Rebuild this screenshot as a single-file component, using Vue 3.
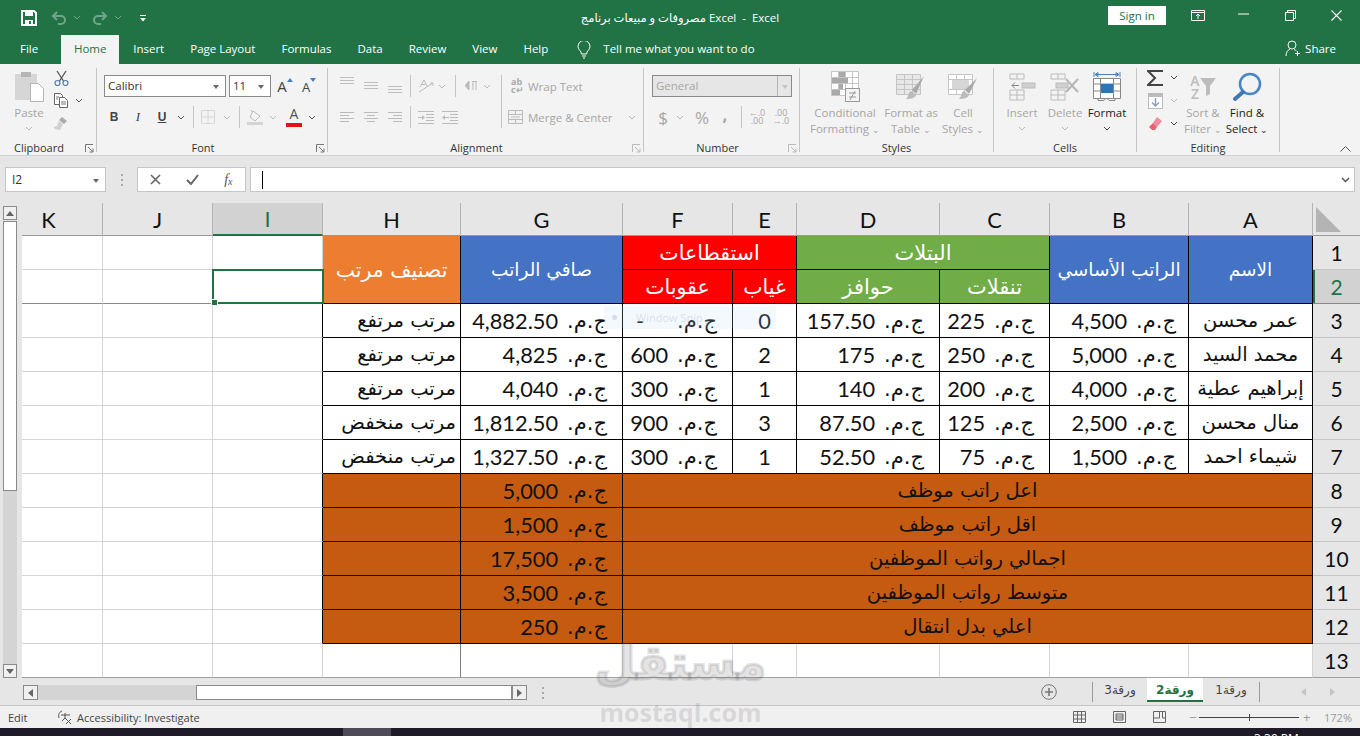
<template>
  <div class="app">
    <!-- title bar -->
    <header class="titlebar">
      <div class="qat">
        <svg width="16" height="16" viewBox="0 0 16 16" class="save"><path d="M1 1h12l2 2v12H1z" fill="none" stroke="#fff" stroke-width="2"/><rect x="4" y="1" width="8" height="5" fill="#fff"/><rect x="4" y="10" width="8" height="5" fill="#fff"/><rect x="8" y="11" width="2" height="3" fill="#217346"/></svg>
        <svg width="16" height="14" viewBox="0 0 16 14" class="undo"><path d="M6 1 2 5l4 4M2 5h8a4 4 0 0 1 0 8H7" fill="none" stroke="#6fa68a" stroke-width="2"/></svg>
        <svg width="8" height="5" viewBox="0 0 8 5" class="qchev"><path d="m1 1 3 3 3-3" fill="none" stroke="#6fa68a"/></svg>
        <svg width="16" height="14" viewBox="0 0 16 14" class="redo"><path d="m10 1 4 4-4 4M14 5H6a4 4 0 0 0 0 8h3" fill="none" stroke="#6fa68a" stroke-width="2"/></svg>
        <svg width="8" height="5" viewBox="0 0 8 5" class="qchev"><path d="m1 1 3 3 3-3" fill="none" stroke="#6fa68a"/></svg>
        <svg width="8" height="8" viewBox="0 0 8 8" class="custom"><path d="M1 1h6v1H1zM1 4h6L4 7.500z" fill="#fff"/></svg>
      </div>
      <div class="doc-title">مصروفات و مبيعات برنامج Excel &nbsp;-&nbsp; Excel</div>
      <div class="win">
        <button class="signin">Sign in</button>
        <svg width="14" height="11" viewBox="0 0 14 11" class="w1"><path d="M.5.5h13v10H.5zM.5 2.500h13M7 9V4.500M5 6l2-2 2 2" fill="none" stroke="#fff"/></svg>
        <svg width="11" height="2" viewBox="0 0 11 2" class="w2"><path d="M0 1h11" stroke="#fff"/></svg>
        <svg width="11" height="11" viewBox="0 0 11 11" class="w3"><path d="M.5 2.500h8v8h-8zM2.500 2.500v-2h8v8h-2" fill="none" stroke="#fff"/></svg>
        <svg width="11" height="11" viewBox="0 0 11 11" class="w4"><path d="m.5.5 10 10M10.500.5l-10 10" stroke="#fff" stroke-width="1.100"/></svg>
      </div>
    </header>

    <!-- tabs -->
    <nav class="tabs">
      <span v-for="t in tabs" :key="t" class="tab" :class="{ active: t === 'Home', file: t === 'File' }">{{ t }}</span>
      <svg width="14" height="18" viewBox="0 0 14 18" class="bulb"><path d="M4.500 13c0-3-3.500-4-3.500-7.500a6 6 0 0 1 12 0C13 9 9.500 10 9.500 13zM5 15h4M6 17h2" fill="none" stroke="#fff"/></svg>
      <span class="tell">Tell me what you want to do</span>
      <span class="share">
        <svg width="16" height="17" viewBox="0 0 16 17"><circle cx="7" cy="5" r="4" fill="none" stroke="#fff"/><path d="M1 16c0-4 2-6 4-7M9 9.500c1 .3 2 1 2.500 1.500M12.500 11v5M10 13.500h5" fill="none" stroke="#fff"/></svg>
        Share
      </span>
    </nav>

    <!-- ribbon -->
    <section class="ribbon">
      <div class="group g-clip">
        <div class="body">
          <div class="big paste">
            <div class="big-ic">
              <svg width="30" height="31" viewBox="0 0 30 31"><rect x="1" y="3" width="22" height="26" fill="#d6d6d6"/><rect x="7" y="1" width="10" height="5" fill="#b5b5b5"/><path d="M16.500 12.500h8l5 5v13h-13z" fill="#fff" stroke="#b5b5b5"/></svg>
            </div>
            <span>Paste</span>
            <svg width="8" height="5" viewBox="0 0 8 5" class="chev"><path d="m1 1 3 3 3-3" fill="none" stroke="#bbb"/></svg>
          </div>
          <div class="mini-col">
            <div class="mini">
              <svg width="15" height="16" viewBox="0 0 15 16"><path d="M3 1l6.500 10M12 1 5.500 11" fill="none" stroke="#555" stroke-width="1.300"/><circle cx="3.500" cy="13" r="2.500" fill="none" stroke="#4a7ebb" stroke-width="1.200"/><circle cx="11.500" cy="13" r="2.500" fill="none" stroke="#4a7ebb" stroke-width="1.200"/></svg>
            </div>
            <div class="mini">
              <svg width="16" height="15" viewBox="0 0 16 15"><path d="M1.500.5h6l2 2v9h-8z" fill="#fff" stroke="#666"/><path d="M6.500 4.500h5l3 3v7h-8z" fill="#fff" stroke="#666"/><path d="M3 4h3M3 6h2M8 9h5M8 11h5" stroke="#777"/></svg>
              <svg width="8" height="5" viewBox="0 0 8 5" class="chev-out"><path d="m1 1 3 3 3-3" fill="none" stroke="#555"/></svg>
            </div>
            <div class="mini">
              <svg width="16" height="15" viewBox="0 0 16 15"><path d="M9 1l5 4-3 3-5-4z" fill="#aaa"/><path d="M6 5l4 3-3 6-5-1-1-2 3-1z" fill="#d0d0d0"/></svg>
            </div>
          </div>
        </div>
        <div class="label">Clipboard</div>
        <svg class="launch" width="9" height="9" viewBox="0 0 9 9"><path d="M.5 8V.5H8M3 3l5 5M8 4.500V8H4.500" fill="none" stroke="#777"/></svg>
      </div>

      <div class="group g-font">
        <div class="body col">
          <div class="row">
            <div class="combo" style="width: 122px">Calibri<i class="tri"></i></div>
            <div class="combo ml3" style="width: 42px">11<i class="tri"></i></div>
            <div class="ic ml2 grow-a">A<svg width="6" height="4" viewBox="0 0 6 4"><path d="M0 4l3-4 3 4z" fill="#4a7ebb"/></svg></div>
            <div class="ic shrink-a">A<svg width="6" height="4" viewBox="0 0 6 4"><path d="M0 0l3 4 3-4z" fill="#4a7ebb"/></svg></div>
          </div>
          <div class="row row2">
            <div class="ic fmt bold mln2">B</div>
            <div class="ic fmt ital">I</div>
            <div class="ic fmt under">U</div>
            <svg width="8" height="5" viewBox="0 0 8 5" class="chev ml3"><path d="m1 1 3 3 3-3" fill="none" stroke="#555"/></svg>
            <i class="vsep ml8"></i>
            <div class="ic ml2"><svg width="14" height="14" viewBox="0 0 14 14"><path d="M.5.500h13v13H.5zM7 .500v13M.5 7h13" fill="none" stroke="#bdbdbd" stroke-dasharray="1 1"/></svg></div>
            <svg width="8" height="5" viewBox="0 0 8 5" class="chev ml3"><path d="m1 1 3 3 3-3" fill="none" stroke="#bbb"/></svg>
            <i class="vsep ml8"></i>
            <div class="ic ml3"><svg width="16" height="15" viewBox="0 0 16 15"><path d="M6 1l7 5-5 5-5-4z" fill="none" stroke="#bbb"/><path d="M5 2 4 0" stroke="#bbb"/><rect y="12" width="16" height="3" fill="#d4d4d4"/></svg></div>
            <svg width="8" height="5" viewBox="0 0 8 5" class="chev ml2"><path d="m1 1 3 3 3-3" fill="none" stroke="#bbb"/></svg>
            <div class="ic fcolor ml5">A<i></i></div>
            <svg width="8" height="5" viewBox="0 0 8 5" class="chev ml2"><path d="m1 1 3 3 3-3" fill="none" stroke="#555"/></svg>
          </div>
        </div>
        <div class="label">Font</div>
        <svg class="launch" width="9" height="9" viewBox="0 0 9 9"><path d="M.5 8V.5H8M3 3l5 5M8 4.500V8H4.500" fill="none" stroke="#777"/></svg>
      </div>

      <div class="group g-align">
        <div class="body col">
          <div class="row">
            <div class="ic"><svg width="14" height="22" viewBox="0 0 14 22"><path d="M0 2.500h14M0 5.500h14M0 8.500h14" stroke="#bdbdbd"/></svg></div>
            <div class="ic"><svg width="14" height="22" viewBox="0 0 14 22"><path d="M0 7.500h14M0 10.500h14M0 13.500h14" stroke="#bdbdbd"/></svg></div>
            <div class="ic"><svg width="14" height="22" viewBox="0 0 14 22"><path d="M0 11.500h14M0 14.500h14M0 17.500h14" stroke="#bdbdbd"/></svg></div>
            <i class="vsep ml3"></i>
            <div class="ic ml3"><svg width="16" height="14" viewBox="0 0 16 14"><path d="M2 8 6 1l3 6M3.500 5.500h4M1 13 15 4M15 4h-3M15 4v3" fill="none" stroke="#bbb"/></svg></div>
            <svg width="8" height="5" viewBox="0 0 8 5" class="chev"><path d="m1 1 3 3 3-3" fill="none" stroke="#bbb"/></svg>
            <i class="vsep ml9"></i>
            <div class="ic ml3"><svg width="13" height="10" viewBox="0 0 13 10"><path d="M4 0v9L0 4.500zM8 0v9M11 0v9M7 .500h5M8 4H7" fill="#bbb" stroke="#bbb"/></svg></div>
            <svg width="8" height="5" viewBox="0 0 8 5" class="chev"><path d="m1 1 3 3 3-3" fill="none" stroke="#bbb"/></svg>
            <i class="vsep ml10"></i>
            <div class="wrap wraptext">
              <span class="ab">ab<br />c↵</span>
              <span class="dim">Wrap Text</span>
            </div>
          </div>
          <div class="row row2">
            <div class="ic"><svg width="14" height="13" viewBox="0 0 14 13"><path d="M0 1.500h14M0 4.500h9M0 7.500h14M0 10.500h9" stroke="#bbb"/></svg></div>
            <div class="ic"><svg width="14" height="13" viewBox="0 0 14 13"><path d="M0 1.500h14M3 4.500h8M0 7.500h14M3 10.500h8" stroke="#bbb"/></svg></div>
            <div class="ic"><svg width="14" height="13" viewBox="0 0 14 13"><path d="M0 1.500h14M5 4.500h9M0 7.500h14M5 10.500h9" stroke="#bbb"/></svg></div>
            <i class="vsep ml3"></i>
            <div class="ic ml3"><svg width="16" height="13" viewBox="0 0 16 13"><path d="M0 .500h16M8 3.500h8M8 6.500h8M8 9.500h8M0 12.500h16" stroke="#bbb"/><path d="M0 6.500h5" stroke="#bbb"/><path d="M4 4l3 2.500L4 9z" fill="#bbb"/></svg></div>
            <div class="ic"><svg width="16" height="13" viewBox="0 0 16 13"><path d="M0 .500h16M8 3.500h8M8 6.500h8M8 9.500h8M0 12.500h16" stroke="#bbb"/><path d="M2 6.500h5" stroke="#bbb"/><path d="M3 4 0 6.500 3 9z" fill="#bbb"/></svg></div>
            <i class="vsep up"></i>
            <div class="wrap merge">
              <svg width="15" height="14" viewBox="0 0 15 14"><path d="M.5.500h14v13H.5zM.5 4.500h14M.5 9.500h14M7.500.500v4M7.500 9.500v4M3 7h9" fill="none" stroke="#bbb"/></svg>
              <span class="dim">Merge &amp; Center</span>
              <svg width="8" height="5" viewBox="0 0 8 5" class="chev ml10"><path d="m1 1 3 3 3-3" fill="none" stroke="#bbb"/></svg>
            </div>
          </div>
        </div>
        <div class="label">Alignment</div>
        <svg class="launch" width="9" height="9" viewBox="0 0 9 9"><path d="M.5 8V.5H8M3 3l5 5M8 4.500V8H4.500" fill="none" stroke="#bbb"/></svg>
      </div>

      <div class="group g-num">
        <div class="body col">
          <div class="row">
            <div class="combo off">General<i class="drop"><i class="tri tri-off"></i></i></div>
          </div>
          <div class="row row2">
            <div class="ic sym mln1">$</div>
            <svg width="8" height="5" viewBox="0 0 8 5" class="chev ml1"><path d="m1 1 3 3 3-3" fill="none" stroke="#bbb"/></svg>
            <div class="ic sym ml6">%</div>
            <div class="ic sym mln1 comma">,</div>
            <i class="vsep ml4"></i>
            <div class="ic dec ml3"><span>←.0</span><span>.00</span></div>
            <div class="ic dec"><span>.00</span><span>→.0</span></div>
          </div>
        </div>
        <div class="label">Number</div>
        <svg class="launch" width="9" height="9" viewBox="0 0 9 9"><path d="M.5 8V.5H8M3 3l5 5M8 4.500V8H4.500" fill="none" stroke="#bbb"/></svg>
      </div>

      <div class="group g-styles">
        <div class="body">
          <div class="big" style="width: 66px">
            <div class="big-ic">
              <svg width="29" height="31" viewBox="0 0 29 31"><path d="M.5.500h27v24H.5zM.5 6.500h27M.5 12.500h27M.5 18.500h27M7.500.500v24M14.500.500v24M21.500.500v24" fill="#fff" stroke="#c5c5c5"/><path d="M8 1h6v5h-6zM1 7h16v5H1zM8 13h4v5H8zM1 19h8v5H1z" fill="#a9a9a9"/><rect x="14.500" y="17.500" width="14" height="13" fill="#f3f3f3" stroke="#999"/><path d="M18 22h7M18 26h7M24 20l-5 9" stroke="#999"/></svg>
            </div>
            <span>Conditional</span><span>Formatting <b class="v">⌄</b></span>
          </div>
          <div class="big" style="width: 66px">
            <div class="big-ic">
              <svg width="30" height="30" viewBox="0 0 30 30"><path d="M.5 2.500h24v20H.5zM.5 7.500h24M.5 12.500h24M.5 17.500h24M8.500 2.500v20M16.500 2.500v20" fill="#e8e8e8" stroke="#c5c5c5"/><path d="M28 4 16 18l4 4z" fill="#a9a9a9"/><path d="M15 19c-3 1-2 5-5 8 5 0 9-1 10-4z" fill="#bbb"/></svg>
            </div>
            <span>Format as</span><span>Table <b class="v">⌄</b></span>
          </div>
          <div class="big" style="width: 38px">
            <div class="big-ic">
              <svg width="30" height="30" viewBox="0 0 30 30"><path d="M.5 2.500h24v20H.5zM.5 7.500h24M8.500 2.500v5M16.500 2.500v5M8.500 17.500v5M16.500 17.500v5M.5 17.500h24" fill="#fff" stroke="#c5c5c5"/><rect x="4" y="8" width="17" height="9" fill="#d6d6d6"/><path d="M29 6 17 18l4 4z" fill="#a9a9a9"/><path d="M16 19c-3 1-2 5-5 8 5 0 9-1 10-4z" fill="#bbb"/></svg>
            </div>
            <span>Cell</span><span>Styles <b class="v">⌄</b></span>
          </div>
        </div>
        <div class="label">Styles</div>
      </div>

      <div class="group g-cells">
        <div class="body">
          <div class="big" style="width: 42px">
            <div class="big-ic">
              <svg width="27" height="28" viewBox="0 0 27 28"><path d="M1 1h14v5H1zM8 1v5M1 17h14v10H1zM1 22h14M8 17v10" fill="none" stroke="#bbb"/><rect x="13" y="10" width="13" height="5" fill="#d0d0d0" stroke="#bbb"/><path d="M10 12.500H3M6 9.500l-3 3 3 3" fill="none" stroke="#888"/></svg>
            </div>
            <span>Insert</span>
            <svg width="8" height="5" viewBox="0 0 8 5" class="chev"><path d="m1 1 3 3 3-3" fill="none" stroke="#bbb"/></svg>
          </div>
          <div class="big" style="width: 44px">
            <div class="big-ic">
              <svg width="30" height="28" viewBox="0 0 30 28"><path d="M1 1h14v5H1zM8 1v5M1 17h14v10H1zM1 22h14M8 17v10" fill="none" stroke="#bbb"/><rect x="6" y="10" width="12" height="5" fill="#d0d0d0" stroke="#bbb"/><path d="m16 6 12 13M28 6 16 19" stroke="#b5b5b5" stroke-width="2"/></svg>
            </div>
            <span>Delete</span>
            <svg width="8" height="5" viewBox="0 0 8 5" class="chev"><path d="m1 1 3 3 3-3" fill="none" stroke="#bbb"/></svg>
          </div>
          <div class="big on" style="width: 40px">
            <div class="big-ic">
              <svg width="28" height="31" viewBox="0 0 28 31"><path d="M1 1v5M27 1v5M2 3.500h24M2 3.500l3-2v4zM26 3.500l-3-2v4z" fill="none" stroke="#4a7ebb"/><path d="M.5 7.500h27v20H.5zM.5 13h27M.5 20h27M7.500 7.500v20M20.500 7.500v20" fill="#fff" stroke="#888"/><rect x="8" y="13" width="12" height="9" fill="#2e75b6"/><path d="M5 27.500v2h6l2-2M14 27.500l2 2h6v-2" fill="none" stroke="#888"/></svg>
            </div>
            <span>Format</span>
            <svg width="8" height="5" viewBox="0 0 8 5" class="chev"><path d="m1 1 3 3 3-3" fill="none" stroke="#444"/></svg>
          </div>
        </div>
        <div class="label">Cells</div>
      </div>

      <div class="group g-edit">
        <div class="body">
          <div class="edit-col">
            <div class="mini">
              <svg width="16" height="16" viewBox="0 0 16 16"><path d="M15 2V1H1l7 7-7 7h14v-1" fill="none" stroke="#444" stroke-width="2"/></svg>
              <svg width="8" height="5" viewBox="0 0 8 5" class="chev-out"><path d="m1 1 3 3 3-3" fill="none" stroke="#444"/></svg>
            </div>
            <div class="mini">
              <svg width="15" height="16" viewBox="0 0 15 16"><rect width="15" height="3" fill="#bbb"/><rect x=".5" y="3.500" width="14" height="12" fill="#fff" stroke="#bbb"/><path d="M7.500 5v8M4 9.500l3.500 3.500L11 9.500" fill="none" stroke="#8a9eb5" stroke-width="1.400"/></svg>
              <svg width="8" height="5" viewBox="0 0 8 5" class="chev-out"><path d="m1 1 3 3 3-3" fill="none" stroke="#bbb"/></svg>
            </div>
            <div class="mini">
              <svg width="14" height="13" viewBox="0 0 14 13"><path d="M9 0l5 4-5 6-4-4z" fill="#f08a9c"/><path d="M5 6l4 4-2 3H4L1 10z" fill="#e8616f"/></svg>
              <svg width="8" height="5" viewBox="0 0 8 5" class="chev-out"><path d="m1 1 3 3 3-3" fill="none" stroke="#444"/></svg>
            </div>
          </div>
          <div class="big" style="width: 44px">
            <div class="big-ic sortic">
              <span class="az">A<br />Z</span>
              <svg width="16" height="19" viewBox="0 0 16 19"><path d="M0 1h16L10 9v8l-4 2V9z" fill="#bdbdbd"/></svg>
            </div>
            <span>Sort &amp;</span><span>Filter <b class="v">⌄</b></span>
          </div>
          <div class="big on" style="width: 44px">
            <div class="big-ic">
              <svg width="30" height="30" viewBox="0 0 30 30"><circle cx="18" cy="12" r="10" fill="none" stroke="#4a86c5" stroke-width="2.600"/><path d="M11 20 3 27" stroke="#3f78b5" stroke-width="4" stroke-linecap="round"/></svg>
            </div>
            <span>Find &amp;</span><span>Select <b class="v">⌄</b></span>
          </div>
        </div>
        <div class="label">Editing</div>
      </div>
      <svg class="collapse" width="11" height="6" viewBox="0 0 11 6"><path d="m.5 5.500 5-5 5 5" fill="none" stroke="#555"/></svg>
    </section>

    <!-- formula bar -->
    <section class="formula">
      <div class="namebox">I2<i class="tri"></i></div>
      <div class="fdots"><i></i><i></i><i></i></div>
      <div class="fbtns">
        <svg width="11" height="11" viewBox="0 0 11 11"><path d="m1 1 9 9M10 1l-9 9" stroke="#666" stroke-width="1.600"/></svg>
        <svg width="13" height="11" viewBox="0 0 13 11"><path d="m1 6 4 4 7-9" fill="none" stroke="#666" stroke-width="2"/></svg>
        <span class="fx">f<sub>x</sub></span>
      </div>
      <div class="finput"><i class="caret"></i>
        <svg width="9" height="6" viewBox="0 0 9 6"><path d="m1 1 3.500 3.500L8 1" fill="none" stroke="#555" stroke-width="1.500"/></svg>
      </div>
    </section>

    <!-- sheet -->
    <section class="sheet">
      <div class="vscroll">
        <button class="sb"><svg width="8" height="5" viewBox="0 0 8 5"><path d="M0 5l4-5 4 5z" fill="#666"/></svg></button>
        <div class="vthumb"></div>
        <div class="vtrack"></div>
        <button class="sb"><svg width="8" height="5" viewBox="0 0 8 5"><path d="M0 0l4 5 4-5z" fill="#666"/></svg></button>
      </div>
      <div class="grid">
        <div v-for="c in headCols" :key="c" class="ch" :class="{ sel: c === 'I', cut: c === 'K' }">{{ c }}</div>
        <div class="corner"><svg width="25" height="25" viewBox="0 0 25 25"><path d="M0 0v25h25z" fill="#b4b4b4"/></svg></div>
        <div
          v-for="(c, i) in cells"
          :key="i"
          class="cell"
          :class="c.cls"
          :style="{ gridColumn: 'span ' + (c.cs || 1), gridRow: 'span ' + (c.rs || 1) }"
        >
          <template v-if="c.money">
            <span class="money"><span class="ar cur" dir="rtl">ج.م.</span><span :class="{ dash: c.money === '-' }">{{ c.money }}</span></span>
          </template>
          <span v-else-if="c.num" class="num">{{ c.num }}</span>
          <span v-else-if="c.text" class="ar">{{ c.text }}</span>
          <div v-if="c.selected" class="selbox"><i></i></div>
        </div>
      </div>
    </section>

    <!-- sheet tabs -->
    <section class="sheetbar">
      <button class="sb hb"><svg width="5" height="8" viewBox="0 0 5 8"><path d="M5 0 0 4l5 4z" fill="#666"/></svg></button>
      <div class="htrack"></div>
      <div class="hthumb"></div>
      <button class="sb hb"><svg width="5" height="8" viewBox="0 0 5 8"><path d="m0 0 5 4-5 4z" fill="#666"/></svg></button>
      <div class="fdots hdots"><i></i><i></i><i></i></div>
      <svg class="plus" width="16" height="16" viewBox="0 0 16 16"><circle cx="8" cy="8" r="7.300" fill="none" stroke="#777"/><path d="M8 4v8M4 8h8" stroke="#777" stroke-width="1.600"/></svg>
      <i class="tsep ts1"></i>
      <span class="stab s3">ورقة3</span>
      <span class="stab s2">ورقة2</span>
      <span class="stab s1">ورقة1</span>
      <i class="tsep"></i>
      <svg class="sarrow a1" width="5" height="8" viewBox="0 0 5 8"><path d="M5 0 0 4l5 4z" fill="#c4c4c4"/></svg>
      <svg class="sarrow a2" width="5" height="8" viewBox="0 0 5 8"><path d="m0 0 5 4-5 4z" fill="#c4c4c4"/></svg>
    </section>

    <!-- status bar -->
    <footer class="status">
      <span class="st-edit">Edit</span>
      <svg width="16" height="15" viewBox="0 0 16 15" class="st-acc"><path d="M5 1C2 2 1 5 2 8M8 3v5M4 5h9M8 8l-3 3M8 8l2 2M9 9l5 5M14 9l-5 5" fill="none" stroke="#555"/></svg>
      <span>Accessibility: Investigate</span>
      <div class="st-right">
        <svg width="13" height="12" viewBox="0 0 13 12"><path d="M.5.500h12v11H.5zM.5 4h12M.5 8h12M4.500.500v11M8.500.500v11" fill="none" stroke="#666"/></svg>
        <svg width="13" height="12" viewBox="0 0 13 12" class="v2"><path d="M.5.500h12v11H.5zM3 3h7v6H3zM3 5h7M3 7h7" fill="none" stroke="#666"/></svg>
        <svg width="13" height="12" viewBox="0 0 13 12" class="v3"><path d="M.5.500h12v11H.5zM.5 7h6M6.500.500V7M12.500 7h-3M9.500.500V7" fill="none" stroke="#666"/></svg>
        <span class="zm">−</span>
        <span class="slider"><i></i></span>
        <span class="zm zp">+</span>
        <span class="pct">172%</span>
      </div>
    </footer>
    <div class="taskbar">
      <i class="tb-item"></i>
      <span class="clock">3:39 PM</span>
    </div>

    <!-- overlays -->
    <div class="snip"><i></i>Window Snip</div>
    <div class="wm">
      <div class="wm-logo">مستقل</div>
      <div class="wm-url">mostaql.com</div>
    </div>
  </div>
</template>

<script setup>
const tabs = ['File', 'Home', 'Insert', 'Page Layout', 'Formulas', 'Data', 'Review', 'View', 'Help']
const headCols = ['K', 'J', 'I', 'H', 'G', 'F', 'E', 'D', 'C', 'B', 'A']

const people = [
  ['عمر محسن', '4,500', '225', '157.50', '0', '-', '4,882.50', 'مرتب مرتفع'],
  ['محمد السيد', '5,000', '250', '175', '2', '600', '4,825', 'مرتب مرتفع'],
  ['إبراهيم عطية', '4,000', '200', '140', '1', '300', '4,040', 'مرتب مرتفع'],
  ['منال محسن', '2,500', '125', '87.50', '3', '900', '1,812.50', 'مرتب منخفض'],
  ['شيماء احمد', '1,500', '75', '52.50', '1', '300', '1,327.50', 'مرتب منخفض']
]

const summary = [
  ['5,000', 'اعل راتب موظف'],
  ['1,500', 'اقل راتب موظف'],
  ['17,500', 'اجمالي رواتب الموظفين'],
  ['3,500', 'متوسط رواتب الموظفين'],
  ['250', 'اعلي بدل انتقال']
]

// cells in grid order, left to right, row by row
const cells = []

function blanks(row, leftBorder) {
  cells.push({ cls: 'blank' + (row === 2 ? ' fz' : '') })
  cells.push({ cls: 'blank' + (row === 2 ? ' fz' : '') })
  cells.push({
    cls: 'blank' + (row === 2 ? ' fz' : '') + (leftBorder ? ' edge' : ''),
    selected: row === 2
  })
}
function rowHead(n) {
  cells.push({ num: n, cls: 'rh' + (n === 2 ? ' sel' : '') })
}

blanks(1)
cells.push({ text: 'تصنيف مرتب', rs: 2, cls: 'hd orange' })
cells.push({ text: 'صافي الراتب', rs: 2, cls: 'hd blue' })
cells.push({ text: 'استقطاعات', cs: 2, cls: 'hd red' })
cells.push({ text: 'البتلات', cs: 2, cls: 'hd green' })
cells.push({ text: 'الراتب الأساسي', rs: 2, cls: 'hd blue' })
cells.push({ text: 'الاسم', rs: 2, cls: 'hd blue' })
rowHead(1)

blanks(2)
cells.push({ text: 'عقوبات', cls: 'hd red' })
cells.push({ text: 'غياب', cls: 'hd red' })
cells.push({ text: 'حوافز', cls: 'hd green' })
cells.push({ text: 'تنقلات', cls: 'hd green' })
rowHead(2)

people.forEach((p, i) => {
  blanks(i + 3, true)
  cells.push({ text: p[7], cls: 'td right hcol' })
  cells.push({ money: p[6], cls: 'td right' })
  cells.push({ money: p[5], cls: 'td right' })
  cells.push({ num: p[4], cls: 'td center' })
  cells.push({ money: p[3], cls: 'td right' })
  cells.push({ money: p[2], cls: 'td right' })
  cells.push({ money: p[1], cls: 'td right bcol' })
  cells.push({ text: p[0], cls: 'td center' })
  rowHead(i + 3)
})

summary.forEach((s, i) => {
  blanks(i + 8, true)
  cells.push({ cls: 'td brown' })
  cells.push({ money: s[0], cls: 'td right brown' })
  cells.push({ text: s[1], cs: 6, cls: 'td center brown' })
  rowHead(i + 8)
})

blanks(13)
cells.push({ cls: 'blank freeze' })
for (let i = 0; i < 7; i++) cells.push({ cls: 'blank' })
rowHead(13)
</script>

<style>
html, body {
  margin: 0;
  background: #e6e6e6;
}
</style>

<style scoped>
.app {
  position: relative;
  width: 1360px;
  height: 736px;
  overflow: hidden;
  display: flex;
  flex-direction: column;
  font-family: "Open Sans", "Noto Sans", sans-serif;
  font-size: 11.5px;
  color: #444;
  background: #e6e6e6;
}
i { display: block; font-style: normal; }
button { font: inherit; }

/* title bar */
.titlebar {
  height: 35px;
  background: #217346;
  display: grid;
  grid-template-columns: 1fr auto 1fr;
  align-items: center;
  color: #fff;
}
.qat { display: flex; align-items: center; padding-left: 21px; height: 35px; }
.undo { margin-left: 14px; }
.qchev { margin-left: 6px; }
.redo { margin-left: 11px; }
.custom { margin-left: 17px; }
.doc-title {
  font-family: "Open Sans", "DejaVu Sans", sans-serif;
  font-size: 11.5px;
  white-space: nowrap;
}
.win { display: flex; align-items: center; justify-content: flex-end; height: 35px; }
.signin {
  width: 58px;
  height: 19px;
  padding: 0;
  border: none;
  background: #fff;
  color: #217346;
  font-size: 11.5px;
  line-height: 19px;
  margin-bottom: 5px;
}
.w1 { margin-left: 25px; margin-bottom: 5px; }
.w2 { margin-left: 33px; margin-bottom: 8px; }
.w3 { margin-left: 36px; margin-bottom: 5px; }
.w4 { margin-left: 35px; margin-right: 18px; margin-bottom: 5px; }

/* tabs */
.tabs {
  height: 29px;
  background: #217346;
  display: flex;
  align-items: flex-end;
  padding-left: 7px;
  color: #fff;
}
.tab {
  height: 29px;
  line-height: 27px;
  padding: 0 13px;
  font-size: 11.5px;
  white-space: nowrap;
}
.tab.file { margin-right: 10px; }
.tab.active {
  background: #f3f3f3;
  color: #217346;
  margin: 0 1px 0 0;
  padding: 0 12px;
  width: 58px;
  box-sizing: border-box;
  text-align: center;
}
.bulb { align-self: center; margin-left: 16px; }
.tell { align-self: center; margin-left: 12px; font-size: 11.5px; margin-bottom: 2px; }
.share {
  align-self: center;
  margin-left: auto;
  margin-right: 24px;
  display: flex;
  align-items: center;
  gap: 4px;
  margin-bottom: 2px;
}

/* ribbon */
.ribbon {
  position: relative;
  height: 92px;
  box-sizing: border-box;
  padding-top: 4px;
  background: #f3f3f3;
  border-bottom: 1px solid #d2d2d2;
  display: flex;
  align-items: flex-start;
}
.group {
  position: relative;
  height: 84px;
  box-sizing: border-box;
  border-right: 1px solid #c6c6c6;
  display: flex;
  flex-direction: column;
}
.g-clip { width: 97px; }
.g-font { width: 231px; padding-left: 7px; }
.g-align { width: 316px; padding-left: 7px; }
.g-num { width: 156px; padding-left: 8px; }
.g-styles { width: 194px; padding-left: 12px; }
.g-cells { width: 143px; padding-left: 7px; }
.g-edit { width: 143px; padding-left: 6px; }
.body { height: 72px; display: flex; flex-shrink: 0; }
.body.col { flex-direction: column; padding-top: 7px; box-sizing: border-box; }
.label {
  height: 16px;
  line-height: 16px;
  font-size: 11px;
  text-align: center;
  color: #333;
}
.g-clip .label, .g-font .label, .g-align .label { padding-right: 18px; }
.g-num .label { padding-right: 8px; }
.g-font .label { margin-left: -7px; }
.g-align .label { margin-left: -7px; }
.g-num .label { margin-left: -8px; }
.g-styles .label { margin-left: -12px; }
.g-cells .label { margin-left: -7px; }
.g-edit .label { margin-left: -6px; }
.launch { position: absolute; right: 2px; bottom: -1px; }
.collapse { position: absolute; right: 9px; bottom: 3px; }
.row { display: flex; align-items: center; height: 22px; }
.row2 { margin-top: 9px; }

.combo {
  position: relative;
  box-sizing: border-box;
  height: 22px;
  line-height: 20px;
  border: 1px solid #8a8a8a;
  background: #fff;
  padding-left: 3px;
  font-size: 11.5px;
  color: #333;
}
.combo.off {
  width: 140px;
  background: #e6e6e6;
  color: #a6a6a6;
}
.tri {
  position: absolute;
  right: 6px;
  top: 50%;
  margin-top: -1px;
  border-left: 3.5px solid transparent;
  border-right: 3.5px solid transparent;
  border-top: 4px solid #666;
}
.tri-off { border-top-color: #c4c4c4; right: 3px; }
.drop {
  position: absolute;
  right: 0;
  top: 0;
  bottom: 0;
  width: 13px;
  border-left: 1px solid #b5b5b5;
}
.ic {
  width: 24px;
  height: 22px;
  flex-shrink: 0;
  display: flex;
  align-items: center;
  justify-content: center;
  color: #444;
}
.vsep { width: 1px; height: 22px; background: #c6c6c6; flex-shrink: 0; }
.vsep.up { height: 31px; margin: -9px 0 0 39px; }
.chev { flex-shrink: 0; }
.ml1 { margin-left: 1px; }
.ml2 { margin-left: 2px; }
.ml3 { margin-left: 3px; }
.ml4 { margin-left: 4px; }
.ml5 { margin-left: 5px; }
.ml6 { margin-left: 6px; }
.ml8 { margin-left: 8px; }
.ml9 { margin-left: 9px; }
.ml10 { margin-left: 10px; }
.mln1 { margin-left: -1px; }
.mln2 { margin-left: -2px; }

.grow-a, .shrink-a { align-items: flex-end; padding-bottom: 2px; box-sizing: border-box; }
.grow-a { font-size: 15px; line-height: 18px; }
.shrink-a { font-size: 13px; line-height: 16px; }
.grow-a svg, .shrink-a svg { align-self: flex-start; margin-top: 3px; }
.fmt { font-family: "Liberation Sans", sans-serif; font-size: 12px; }
.bold { font-weight: 700; }
.ital { font-style: italic; font-family: "Liberation Serif", serif; font-size: 13px; }
.under { text-decoration: underline; font-weight: 700; }
.fcolor {
  position: relative;
  font-size: 14px;
  line-height: 16px;
  align-items: flex-start;
  color: #555;
}
.fcolor i {
  position: absolute;
  left: 4px;
  bottom: 1px;
  width: 16px;
  height: 4px;
  background: #e3101b;
}
.wrap { display: flex; align-items: center; gap: 4px; white-space: nowrap; }
.wraptext { margin-left: 9px; }
.merge { margin-left: 6px; gap: 5px; }
.ab {
  width: 13px;
  font-size: 9px;
  font-weight: 700;
  line-height: 8px;
  color: #aaa;
}
.dim { color: #a6a6a6; }
.sym {
  font-size: 17px;
  color: #a6a6a6;
}
.comma { font-weight: 700; padding-bottom: 6px; box-sizing: border-box; }
.dec {
  flex-direction: column;
  font-size: 9px;
  line-height: 8px;
  color: #a6a6a6;
  align-items: center;
}

.big {
  display: flex;
  flex-direction: column;
  align-items: center;
  flex-shrink: 0;
  font-size: 11.5px;
  line-height: 16px;
  color: #a6a6a6;
  white-space: nowrap;
}
.big.on { color: #222; }
.big-ic {
  height: 37px;
  display: flex;
  align-items: center;
  justify-content: center;
}
.big .chev { margin-top: 5px; }
.v { font-weight: 400; font-size: 9px; line-height: 8px; }
.paste { width: 46px; margin-left: 6px; }
.mini-col { width: 18px; position: relative; }
.mini-col, .edit-col { display: flex; flex-direction: column; margin-top: -2px; }
.mini {
  position: relative;
  width: 24px;
  height: 23px;
  display: flex;
  align-items: center;
  justify-content: center;
}
.mini-col .mini { width: 18px; }
.chev-out { position: absolute; left: 100%; top: 9px; margin-left: 5px; }
.edit-col { width: 38px; }
.edit-col .chev-out { margin-left: 3px; }
.sortic { gap: 0; align-items: center; }
.az {
  font-size: 14px;
  line-height: 13px;
  font-weight: 600;
  color: #bdbdbd;
  text-align: center;
}

/* formula bar */
.formula {
  height: 47px;
  box-sizing: border-box;
  padding: 11px 5px 0;
  display: flex;
  align-items: flex-start;
  background: #e6e6e6;
}
.namebox {
  position: relative;
  width: 101px;
  height: 25px;
  box-sizing: border-box;
  line-height: 23px;
  padding-left: 6px;
  background: #fff;
  border: 1px solid #c6c6c6;
  font-size: 12px;
  color: #333;
}
.fdots {
  width: 31px;
  height: 25px;
  display: flex;
  flex-direction: column;
  align-items: center;
  justify-content: center;
  gap: 3px;
}
.fdots i { width: 2px; height: 2px; background: #aaa; }
.fbtns {
  width: 109px;
  height: 25px;
  box-sizing: border-box;
  background: #fff;
  border: 1px solid #c6c6c6;
  display: flex;
  align-items: center;
  justify-content: space-around;
}
.fx {
  font-family: "Liberation Serif", serif;
  font-style: italic;
  font-size: 14px;
  color: #555;
}
.fx sub { font-size: 10px; vertical-align: -1px; }
.finput {
  flex: 1;
  height: 25px;
  margin-left: 4px;
  box-sizing: border-box;
  background: #fff;
  border: 1px solid #c6c6c6;
  display: flex;
  align-items: center;
  justify-content: space-between;
  padding: 0 4px 0 11px;
}
.caret { width: 1px; height: 18px; background: #000; }

/* sheet */
.sheet { height: 475px; display: flex; background: #e6e6e6; }
.vscroll {
  width: 22px;
  box-sizing: border-box;
  padding: 3px 5px 0 3px;
  display: flex;
  flex-direction: column;
}
.sb {
  flex-shrink: 0;
  width: 14px;
  height: 14px;
  padding: 0;
  border: 1px solid #8a8a8a;
  background: #f0f0f0;
  display: flex;
  align-items: center;
  justify-content: center;
}
.vthumb {
  flex-shrink: 0;
  height: 270px;
  margin-top: 1px;
  box-sizing: border-box;
  background: #fff;
  border: 1px solid #8a8a8a;
}
.vtrack { flex: 1; background: #d4d4d4; }
.grid {
  display: grid;
  grid-template-columns: 81px 110px 110px 138px 162px 110px 64px 143px 110px 139px 124px 47px;
  grid-template-rows: 33px repeat(13, 34px);
  width: 1338px;
  height: 475px;
  font-family: Lato, "DejaVu Sans", sans-serif;
  font-size: 21.8px;
  color: #111;
}
.ch {
  display: flex;
  align-items: center;
  justify-content: center;
  box-sizing: border-box;
  background: #e6e6e6;
  border-right: 1px solid #b4b4b4;
  border-bottom: 1px solid #9a9a9a;
}
.ch.cut { padding-right: 27px; }
.ch.sel {
  background: #d2d2d2;
  color: #217346;
  border-bottom: 2px solid #217346;
}
.corner {
  box-sizing: border-box;
  background: #e6e6e6;
  padding: 4px 0 0 3px;
  border-bottom: 1px solid #9a9a9a;
}
.cell {
  position: relative;
  box-sizing: border-box;
  min-width: 0;
  display: flex;
  align-items: center;
  background: #fff;
  white-space: nowrap;
  border-right: 1px solid #000;
  border-bottom: 1px solid #000;
}
.blank { border-color: #d4d4d4; }
.blank.edge { border-right-color: #000; }
.blank.fz { border-bottom-color: #8a8a8a; }
.blank.freeze { border-right-color: #808080; }
.grid > .cell:nth-last-child(-n + 12) { border-bottom-color: #a0a0a0; }
.hd {
  justify-content: center;
  color: #fff;
}
.orange { background: #ed7d31; }
.blue { background: #4472c4; }
.red { background: #f00; }
.green { background: #70ad47; }
.brown { background: #c55a11; }
.td.center { justify-content: center; }
.td.right { justify-content: flex-end; padding-right: 15px; }
.td.bcol { padding-right: 12px; }
.td.hcol { padding-right: 4px; }
.rh {
  justify-content: center;
  background: #e6e6e6;
  border-right: none;
  border-bottom: 1px solid #c6c6c6;
  font-size: 21px;
}
.rh.sel {
  background: #d2d2d2;
  color: #217346;
  box-shadow: inset 2px 0 0 #217346;
  border-bottom-color: #8a8a8a;
}
.ar {
  font-family: "DejaVu Sans", sans-serif;
  font-size: 19.5px;
}
.hd .ar { font-size: 20.5px; }
.hd.blue .ar { font-size: 18.5px; }
.hd.green .ar { font-size: 21px; }
.num { line-height: 1; }
.money { display: flex; flex-direction: row-reverse; align-items: center; gap: 9px; }
.cur { font-size: 21px; }
.dash { padding-right: 24px; }
.selbox {
  position: absolute;
  left: -1px;
  top: -1px;
  right: -2px;
  bottom: -1px;
  border: 2px solid #217346;
  z-index: 2;
}
.selbox i {
  position: absolute;
  left: -3px;
  bottom: -4px;
  width: 5px;
  height: 5px;
  background: #217346;
  border: 1px solid #fff;
}

/* sheet tabs */
.sheetbar {
  height: 28px;
  background: #e6e6e6;
  display: flex;
  align-items: flex-start;
  padding-left: 23px;
  box-sizing: border-box;
  border-bottom: 1px solid #c6c6c6;
}
.hb { margin-top: 7px; width: 15px; height: 15px; }
.htrack { width: 158px; height: 15px; margin-top: 7px; background: #d4d4d4; }
.hthumb {
  width: 316px;
  height: 15px;
  margin-top: 7px;
  box-sizing: border-box;
  background: #fff;
  border: 1px solid #8a8a8a;
}
.hdots { width: 32px; height: 15px; margin-top: 7px; }
.plus { margin: 6px 0 0 482px; }
.tsep { width: 1px; height: 20px; margin-top: 4px; background: #999; }
.ts1 { margin-left: 35px; }
.stab {
  font-family: "DejaVu Sans", sans-serif;
  font-size: 12px;
  height: 24px;
  line-height: 24px;
  box-sizing: border-box;
  text-align: center;
  color: #444;
}
.s3 { width: 54px; }
.s2 {
  width: 56px;
  background: #fff;
  color: #217346;
  font-weight: 700;
  border-bottom: 2px solid #217346;
}
.s1 { width: 56px; }
.sarrow { margin-top: 10px; }
.a1 { margin-left: 41px; }
.a2 { margin-left: 24px; }

/* status */
.status {
  height: 22px;
  background: #f0f0f0;
  display: flex;
  align-items: center;
  padding-left: 8px;
  font-size: 11px;
  color: #444;
}
.st-edit { width: 49px; }
.st-acc { margin-right: 4px; }
.st-right {
  margin-left: auto;
  display: flex;
  align-items: center;
  padding-right: 8px;
  color: #999;
}
.v2, .v3 { margin-left: 27px; }
.zm { margin-left: 23px; font-size: 13px; width: 8px; }
.slider {
  position: relative;
  width: 100px;
  height: 1px;
  margin-left: 2px;
  background: #444;
}
.slider i {
  position: absolute;
  left: 50px;
  top: -3px;
  width: 1px;
  height: 7px;
  background: #444;
}
.zp { margin-left: 4px; }
.pct { margin-left: 13px; }

/* taskbar */
.taskbar {
  position: relative;
  height: 8px;
  overflow: hidden;
  background: #1e1a28;
}
.tb-item {
  position: absolute;
  left: 343px;
  top: 0;
  width: 48px;
  height: 8px;
  background: #4f4a58;
}
.clock {
  position: absolute;
  left: 1254px;
  top: 4px;
  color: #fff;
  font-size: 12px;
  line-height: 14px;
}

/* overlays */
.snip {
  position: absolute;
  left: 604px;
  top: 306px;
  width: 172px;
  height: 23px;
  line-height: 23px;
  padding-left: 32px;
  box-sizing: border-box;
  background: rgba(190, 220, 250, 0.18);
  color: rgba(120, 140, 170, 0.25);
  font-size: 11px;
}
.snip i {
  position: absolute;
  left: 8px;
  top: 9px;
  width: 5px;
  height: 5px;
  border-radius: 50%;
  background: rgba(120, 140, 170, 0.25);
}
.wm {
  position: absolute;
  left: 598px;
  top: 627px;
  width: 165px;
  display: flex;
  flex-direction: column;
  align-items: center;
  pointer-events: none;
  color: rgba(110, 110, 110, 0.2);
}
.wm-logo {
  font-family: "DejaVu Sans", sans-serif;
  font-weight: 700;
  font-size: 47px;
  line-height: 72px;
  -webkit-text-stroke: 3px rgba(110, 110, 110, 0.2);
  white-space: nowrap;
}
.wm-url {
  font-family: "Open Sans", sans-serif;
  font-weight: 700;
  font-size: 25px;
  line-height: 26px;
  white-space: nowrap;
}
</style>
